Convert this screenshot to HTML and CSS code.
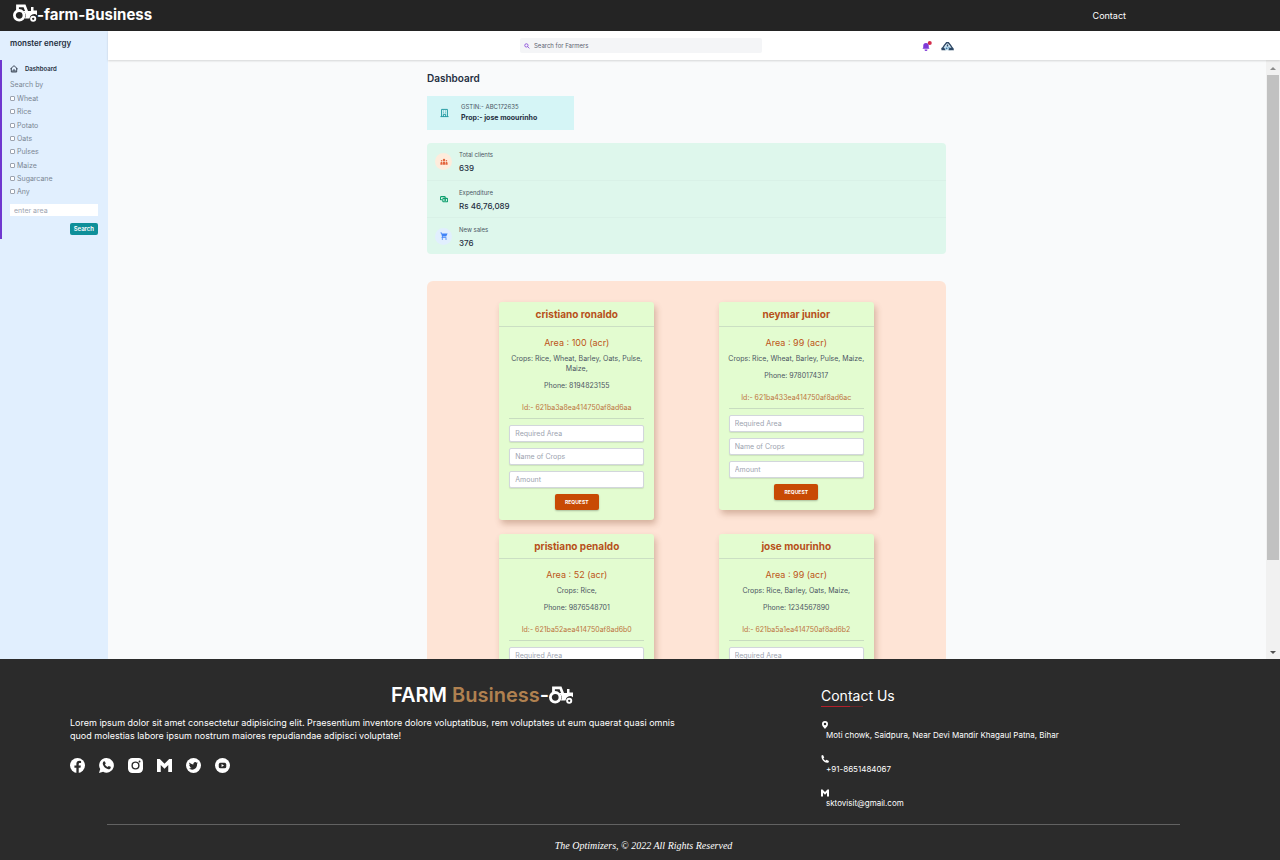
FILE: index.html
```html
<!DOCTYPE html>
<html lang="en">
<head>
<meta charset="utf-8">
<meta name="viewport" content="width=device-width, initial-scale=1">
<title>Farm Business</title>
<link rel="stylesheet" href="styles.css">
</head>
<body>
<svg width="0" height="0" class="sprite" aria-hidden="true">
  <symbol id="tractor" viewBox="0 0 24 18">
    <g fill="none" stroke="currentColor" stroke-width="2.8"><circle cx="6.2" cy="11.3" r="4.8"/><circle cx="20.2" cy="14.8" r="2.1" stroke-width="1.9"/><path d="M4.500 6V1.800h7l2.500 6.400"/></g>
    <path fill="currentColor" d="M10 7h8V3h2.500v3.500H24v4.700a4.600 4.600 0 0 0-7.500 3.300h-4.500a6 6 0 0 0-2-7.500z"/>
  </symbol>
  <symbol id="gmail" viewBox="0 0 16 16"><path fill="currentColor" d="M0 1h3l5 5 5-5h3v14h-4V7.500l-4 4-4-4V15H0z"/></symbol>
</svg>

<header class="topbar">
  <a class="logo" href="#"><svg class="logo-icon"><use href="#tractor"/></svg>-farm-Business</a>
  <a class="top-link" href="#contact">Contact</a>
</header>

<div class="workspace">
  <aside class="sidebar">
    <h2 class="account">monster energy</h2>
    <div class="side-menu">
      <a class="side-link" href="#"><svg class="side-icon" viewBox="0 0 24 24" fill="none" stroke="currentColor" stroke-width="2.500"><path d="M1 12 12 2l11 10M4 9v12h16V9M9 21v-6h6v6"/></svg>Dashboard</a>
      <form class="filters">
        <p class="filters-title">Search by</p>
        <label class="check"><input type="checkbox">Wheat</label>
        <label class="check"><input type="checkbox">Rice</label>
        <label class="check"><input type="checkbox">Potato</label>
        <label class="check"><input type="checkbox">Oats</label>
        <label class="check"><input type="checkbox">Pulses</label>
        <label class="check"><input type="checkbox">Maize</label>
        <label class="check"><input type="checkbox">Sugarcane</label>
        <label class="check"><input type="checkbox">Any</label>
        <input class="area-input" type="text" placeholder="enter area" aria-label="Area">
        <button class="search-btn" type="button">Search</button>
      </form>
    </div>
  </aside>

  <div class="content">
    <div class="toolbar">
      <label class="search"><svg class="search-icon" viewBox="0 0 20 20" fill="none" stroke="currentColor" stroke-width="2.600"><circle cx="8" cy="8" r="5.500"/><path d="m12 12 6 6"/></svg><input type="text" placeholder="Search for Farmers" aria-label="Search for Farmers"></label>
      <div class="tools">
        <button class="icon-btn" type="button" aria-label="Notifications"><svg class="bell" viewBox="0 0 20 20"><path fill="#7e3ad6" d="M8 4a5.500 5.500 0 0 0-5.500 5.500V13L1 15.500h14L13.500 13V9.500A5.500 5.500 0 0 0 8 4zM5 17h6a3 3 0 0 1-6 0z"/><circle cx="15.500" cy="4" r="4" fill="#d42d4c"/></svg></button>
        <button class="icon-btn" type="button" aria-label="Profile"><svg class="avatar" viewBox="0 0 28 20"><path fill="#c5e2f2" d="M7 12 14 5l7 7v7H7z"/><path fill="none" stroke="#2d4866" stroke-width="3" d="M2 17 7 9l5-6h4l5 6 5 8"/><path fill="#2d4866" d="M1 14h6l3 5H1zM18 14h8l2 5H16zM12.500 7h3v4h-3z"/><circle cx="12" cy="15" r="2" fill="#3975a5"/><circle cx="17" cy="14" r="1.500" fill="#3975a5"/></svg></button>
      </div>
    </div>

    <div class="scroller">
      <main class="main">
        <h1 class="page-title">Dashboard</h1>
        <section class="owner">
          <svg class="owner-icon" viewBox="0 0 20 20" fill="none" stroke="currentColor" stroke-width="2"><path d="M3.500 18V2h13v16M1 18h18M7.500 18v-5h5v5M7 5.500h1.500M11.500 5.500H13M7 9.500h1.500M11.500 9.500H13"/></svg>
          <div><p class="owner-tax">GSTIN:- ABC172635</p><p class="owner-name">Prop:- jose moourinho</p></div>
        </section>
        <section class="stats">
          <div class="stat">
            <span class="stat-icon clients"><svg viewBox="0 0 20 20" fill="currentColor"><circle cx="10" cy="5" r="3"/><circle cx="4" cy="7" r="2"/><circle cx="16" cy="7" r="2"/><path d="M6 17v-4a4 4 0 0 1 8 0v4zM1 17v-4a3 3 0 0 1 4-2.800V17zM19 17v-4a3 3 0 0 0-4-2.800V17z"/></svg></span>
            <div><p class="stat-label">Total clients</p><p class="stat-value">639</p></div>
          </div>
          <div class="stat">
            <span class="stat-icon money"><svg viewBox="0 0 20 20" fill="none" stroke="currentColor" stroke-width="2.800"><path d="M5 12H3a2 2 0 0 1-2-2V6a2 2 0 0 1 2-2h8a2 2 0 0 1 2 2v2"/><rect x="7" y="8.500" width="12" height="8.500" rx="2"/><circle cx="13" cy="12.700" r="1.200"/></svg></span>
            <div><p class="stat-label">Expenditure</p><p class="stat-value">Rs 46,76,089</p></div>
          </div>
          <div class="stat">
            <span class="stat-icon sales"><svg viewBox="0 0 20 20" fill="currentColor"><path d="M1 1h3.500l.7 2.500H19l-3.500 8H7l-.7 1.800H16v2H3.500l1.500-4L2.800 3H1z"/><circle cx="6" cy="17.500" r="1.800"/><circle cx="15" cy="17.500" r="1.800"/></svg></span>
            <div><p class="stat-label">New sales</p><p class="stat-value">376</p></div>
          </div>
        </section>

        <section class="farmers">
          <article class="card">
            <h2 class="card-name">cristiano ronaldo</h2>
            <form class="card-body">
              <p class="card-area">Area : 100 (acr)</p>
              <p class="card-line">Crops: Rice, Wheat, Barley, Oats, Pulse, Maize,</p>
              <p class="card-line">Phone: 8194823155</p>
              <p class="card-id">Id:- 621ba3a8ea414750af8ad6aa</p>
              <input type="text" placeholder="Required Area" aria-label="Required Area">
              <input type="text" placeholder="Name of Crops" aria-label="Name of Crops">
              <input type="text" placeholder="Amount" aria-label="Amount">
              <button class="request" type="button">REQUEST</button>
            </form>
          </article>
          <article class="card">
            <h2 class="card-name">neymar junior</h2>
            <form class="card-body">
              <p class="card-area">Area : 99 (acr)</p>
              <p class="card-line">Crops: Rice, Wheat, Barley, Pulse, Maize,</p>
              <p class="card-line">Phone: 9780174317</p>
              <p class="card-id">Id:- 621ba433ea414750af8ad6ac</p>
              <input type="text" placeholder="Required Area" aria-label="Required Area">
              <input type="text" placeholder="Name of Crops" aria-label="Name of Crops">
              <input type="text" placeholder="Amount" aria-label="Amount">
              <button class="request" type="button">REQUEST</button>
            </form>
          </article>
          <article class="card">
            <h2 class="card-name">pristiano penaldo</h2>
            <form class="card-body">
              <p class="card-area">Area : 52 (acr)</p>
              <p class="card-line">Crops: Rice,</p>
              <p class="card-line">Phone: 9876548701</p>
              <p class="card-id">Id:- 621ba52aea414750af8ad6b0</p>
              <input type="text" placeholder="Required Area" aria-label="Required Area">
            </form>
          </article>
          <article class="card">
            <h2 class="card-name">jose mourinho</h2>
            <form class="card-body">
              <p class="card-area">Area : 99 (acr)</p>
              <p class="card-line">Crops: Rice, Barley, Oats, Maize,</p>
              <p class="card-line">Phone: 1234567890</p>
              <p class="card-id">Id:- 621ba5a1ea414750af8ad6b2</p>
              <input type="text" placeholder="Required Area" aria-label="Required Area">
            </form>
          </article>
        </section>
      </main>
      <div class="scrollbar" aria-hidden="true">
        <svg class="arrow up" viewBox="0 0 8 4"><path fill="currentColor" d="M0 4 4 0l4 4z"/></svg>
        <div class="track"><div class="thumb"></div></div>
        <svg class="arrow" viewBox="0 0 8 4"><path fill="currentColor" d="M0 0h8L4 4z"/></svg>
      </div>
    </div>
  </div>
</div>

<footer class="footer" id="contact">
  <div class="footer-cols">
    <section>
      <h2 class="brand">FARM&nbsp;<span>Business</span>-<svg class="brand-icon"><use href="#tractor"/></svg></h2>
      <p class="blurb">Lorem ipsum dolor sit amet consectetur adipisicing elit. Praesentium inventore dolore voluptatibus, rem voluptates ut eum quaerat quasi omnis quod molestias labore ipsum nostrum maiores repudiandae adipisci voluptate!</p>
      <nav class="social">
        <a href="#" aria-label="Facebook"><svg viewBox="0 0 16 16"><circle cx="8" cy="8" r="8" fill="#fff"/><path fill="#2b2b2b" d="M6.800 16v-5.700H4.700V8h2.100V6.200c0-2.100 1.300-3.200 3.100-3.200l1.900.2v2h-1.100c-1 0-1.400.6-1.400 1.300V8h2.300l-.4 2.300H9.300V16z"/></svg></a>
        <a href="#" aria-label="WhatsApp"><svg viewBox="0 0 16 16"><path fill="#fff" d="M8.200 0a7.800 7.800 0 1 1-3.800 14.700L0 16l1.300-4.200A7.800 7.800 0 0 1 8.200 0z"/><path fill="#2b2b2b" d="M5.200 3.500 6.300 3.600l.9 2.200-.9 1.100c.7 1.300 1.600 2.100 3 2.700l1-1.200 2.200 1v.9c-.4 1.600-1.900 2-3.300 1.500C6.600 11 4.700 9 4.100 6.600c-.3-1.300.1-2.500 1.100-3.100z"/></svg></a>
        <a href="#" aria-label="Instagram"><svg viewBox="0 0 16 16"><rect width="16" height="16" rx="4.500" fill="#fff"/><circle cx="8" cy="8" r="3.600" fill="none" stroke="#2b2b2b" stroke-width="1.500"/><circle cx="12.300" cy="3.700" r="1" fill="#2b2b2b"/></svg></a>
        <a href="#" aria-label="Gmail"><svg><use href="#gmail"/></svg></a>
        <a href="#" aria-label="Twitter"><svg viewBox="0 0 16 16"><circle cx="8" cy="8" r="8" fill="#fff"/><path fill="#2b2b2b" d="M12.800 5.200c-.4.200-.8.300-1.100.3.400-.2.700-.6.900-1-.4.200-.8.400-1.300.5a2 2 0 0 0-3.400 1.800C6.200 6.700 4.700 5.900 3.700 4.700c-.6 1-.2 2.100.6 2.700-.3 0-.6-.1-.9-.3 0 1 .7 1.800 1.600 2-.3.100-.6.100-.9 0 .3.800 1 1.400 1.900 1.400-.9.700-1.900.9-3 .8 4.400 2.800 9 .1 8.800-5 .4-.3.700-.700 1-1.100z"/></svg></a>
        <a href="#" aria-label="YouTube"><svg viewBox="0 0 16 16"><circle cx="8" cy="8" r="8" fill="#fff"/><rect x="4" y="5" width="8" height="6" rx="1.800" fill="#2b2b2b"/><path fill="#fff" d="m7 6.500 2.600 1.500L7 9.500z"/></svg></a>
      </nav>
    </section>
    <section class="contact">
      <h2 class="contact-title">Contact Us</h2>
      <ul class="contact-list">
        <li><svg viewBox="0 0 16 16"><path fill="#fff" fill-rule="evenodd" d="M8 0a6 6 0 0 1 6 6c0 4-3.500 7-6 10C5.500 13 2 10 2 6a6 6 0 0 1 6-6zm0 3.500a2.500 2.500 0 1 0 0 5 2.500 2.500 0 0 0 0-5z"/></svg><p>Moti chowk, Saidpura, Near Devi Mandir Khagaul Patna, Bihar</p></li>
        <li><svg viewBox="0 0 16 16"><path fill="#fff" d="M1 1 4 0l2.500 5L4.500 7c1 2 2.500 3.500 4.500 4.500l2-2 5 2.500-1 3C8 17.500 0 10 1 1z"/></svg><p>+91-8651484067</p></li>
        <li><svg><use href="#gmail"/></svg><p>sktovisit@gmail.com</p></li>
      </ul>
    </section>
  </div>
  <p class="legal">The Optimizers, © 2022 All Rights Reserved</p>
</footer>
</body>
</html>
```
FILE: styles.css
```css
* { box-sizing: border-box; }
body { margin: 0; height: 100vh; display: flex; flex-direction: column; font-family: Inter, "Liberation Sans", sans-serif; font-size: 7px; line-height: 10px; color: #4b5563; background: #f9fafb; }
h1, h2, p, ul { margin: 0; padding: 0; }
a { color: inherit; text-decoration: none; }
button, input { font: inherit; }
svg { display: block; }
.sprite { position: absolute; }

.topbar { display: flex; justify-content: space-between; align-items: center; padding: 4px 154px 5px 13px; background: #242424; color: #fff; flex: none; }
.logo { display: flex; align-items: center; font-size: 15px; line-height: 22px; font-weight: 700; }
.logo-icon { width: 24px; height: 18px; margin-bottom: 4px; }
.top-link { font-size: 9px; line-height: 13px; }

.workspace { flex: 1; min-height: 0; display: flex; }
.sidebar { flex: none; width: 108px; background: #e1effe; color: #7b8794; }
.account { padding: 7px 10px 11px; font-size: 8px; line-height: 11px; font-weight: 600; color: #252f3f; }
.side-menu { border-left: 2px solid #7038cf; border-radius: 0 2px 2px 0; padding: 4px 10px 4px 8px; }
.side-link { display: flex; align-items: center; gap: 7px; font-size: 6px; line-height: 10px; font-weight: 600; color: #252f3f; }
.side-icon { width: 8px; height: 8px; }
.filters { display: flex; flex-direction: column; padding-top: 4px; }
.filters-title { font-size: 7px; line-height: 13px; }
.check { display: flex; align-items: center; gap: 2px; height: 13px; padding-top: 3px; font-size: 7px; line-height: 10px; }
.check:nth-of-type(3n) { height: 14px; }
.check input { appearance: none; width: 5px; height: 5px; margin: 0 0 1px; border: 1px solid #9ca3af; border-radius: 1px; background: #fff; }
.area-input { width: 100%; height: 12px; margin-top: 7px; padding: 0 4px; border: 0; background: #fff; font-size: 7px; }
.search-btn { align-self: flex-end; margin-top: 7px; height: 12px; padding: 0 4px; border: 0; border-radius: 2px; background: #0e8f99; color: #fff; font-size: 6px; line-height: 12px; font-weight: 600; }
::placeholder { color: #9ca3af; opacity: 1; }

.content { flex: 1; min-width: 0; display: flex; flex-direction: column; }
.toolbar { flex: none; display: flex; justify-content: flex-end; align-items: center; gap: 160px; height: 29px; padding-right: 326px; background: #fff; box-shadow: 0 1px 2px rgba(0, 0, 0, .15); z-index: 1; }
.search { display: flex; align-items: center; gap: 4px; width: 242px; height: 15px; padding: 0 4px; border-radius: 2px; background: #f4f5f7; color: #7e3ad6; }
.search-icon { width: 6px; height: 6px; }
.search input { flex: 1; min-width: 0; padding: 0; border: 0; background: none; font-size: 6px; outline: 0; }
.search input::placeholder { color: #5b6270; }
.tools { display: flex; gap: 9px; }
.icon-btn { padding: 0; border: 0; background: none; }
.bell { width: 10px; height: 10px; }
.avatar { width: 13px; height: 10px; }

.scroller { flex: 1; min-height: 0; display: flex; }
.main { flex: 1; min-width: 0; overflow: hidden; padding: 11px 320px 0 319px; }
.page-title { font-size: 10px; line-height: 14px; font-weight: 600; color: #252f3f; }
.owner { display: flex; align-items: center; gap: 12px; width: 147px; margin-top: 11px; padding: 6px 13px 7px; background: #d5f5f6; }
.owner-icon { width: 9px; height: 10px; color: #16939c; }
.owner-tax { font-size: 6px; line-height: 10px; }
.owner-name { font-size: 7px; line-height: 11px; font-weight: 700; color: #252f3f; white-space: nowrap; }
.stats { margin-top: 13px; border-radius: 4px; background: #def7ec; }
.stat { display: flex; align-items: center; gap: 7px; height: 37px; padding-left: 8px; border-top: 1px solid #d9f1e7; }
.stat:first-child { border-top: 0; }
.stat-icon { display: grid; place-items: center; width: 17px; height: 17px; border-radius: 50%; }
.stat-icon svg { width: 8px; height: 8px; }
.clients { background: #feecdc; color: #e3643c; }
.money { color: #0e9f6e; }
.sales { background: #e1effe; color: #3f83f8; }
.stat-label { font-size: 6px; line-height: 9px; margin-bottom: 4px; }
.stat-value { font-size: 8px; line-height: 10px; font-weight: 500; color: #252f3f; }

.farmers { display: grid; grid-template-columns: 1fr 1fr; gap: 14px 0; align-items: start; justify-items: center; margin-top: 27px; padding: 21px 40px; border-radius: 6px; background: #fee4d6; }
.card { width: 155px; border-radius: 3px; background: #e3fcd0; box-shadow: 2px 4px 6px rgba(120, 60, 30, .3); text-align: center; }
.card-name { padding: 5px 0; border-bottom: 1px solid #cbdfc3; font-size: 10px; line-height: 14px; font-weight: 700; color: #b7501a; }
.card-body { display: flex; flex-direction: column; padding: 10px 0; }
.card-area { font-size: 9px; line-height: 12px; color: #bd5518; margin-bottom: 5px; }
.card-line { margin: 0 6px 7px; }
.card-id { margin: 5px 10px 6px; padding-bottom: 5px; border-bottom: 1px solid #c8dcc0; color: #bd7440; }
.card-body input { height: 17px; margin: 0 10px 6px; padding: 0 5px; border: 1px solid #d2d6dc; border-radius: 2px; background: #fff; box-shadow: 0 1px 1px rgba(0, 0, 0, .1); }
.card-body .request { align-self: center; width: 44px; height: 16px; padding: 0; border: 0; border-radius: 2px; background: #c84a04; color: #fff; font-size: 5px; font-weight: 700; box-shadow: 0 1px 2px rgba(0, 0, 0, .25); }

.scrollbar { flex: none; width: 14px; display: flex; flex-direction: column; align-items: center; padding: 7px 1px 5px; background: #f1f1f1; color: #505050; }
.arrow { width: 6px; height: 3px; }
.arrow.up { color: #8b8b8b; }
.track { flex: 1; align-self: stretch; padding: 5px 0; }
.thumb { height: 85%; background: #c1c1c1; }

.footer { flex: none; padding: 24px 70px 8px; background: #2b2b2b; color: #fff; }
.footer-cols { display: grid; grid-template-columns: 751px 1fr; }
.brand { display: flex; align-items: center; margin-left: 321px; font-size: 20px; line-height: 24px; font-weight: 600; }
.brand span { color: #b08150; font-weight: 600; }
.brand-icon { width: 24px; height: 18px; }
.blurb { max-width: 612px; margin-top: 9px; font-size: 9px; line-height: 13px; }
.social { display: flex; gap: 14px; margin-top: 16px; }
.social svg { width: 15px; height: 15px; }
.contact-title { width: max-content; padding-top: 3px; font-size: 14px; line-height: 20px; font-weight: 400; }
.contact-title::after { content: ""; display: block; width: 42px; height: 1px; background: linear-gradient(90deg, #b3202b 70%, #682528 70%); }
.contact-list { list-style: none; margin-top: 14px; display: grid; gap: 13px; }
.contact-list svg { width: 8px; height: 8px; }
.contact-list p { padding-left: 5px; font-size: 8px; line-height: 13px; }
.legal { margin: 14px 30px 0 37px; padding-top: 15px; border-top: 1px solid #626262; font-family: "Liberation Serif", serif; font-style: italic; font-size: 10px; line-height: 12px; text-align: center; }
```
